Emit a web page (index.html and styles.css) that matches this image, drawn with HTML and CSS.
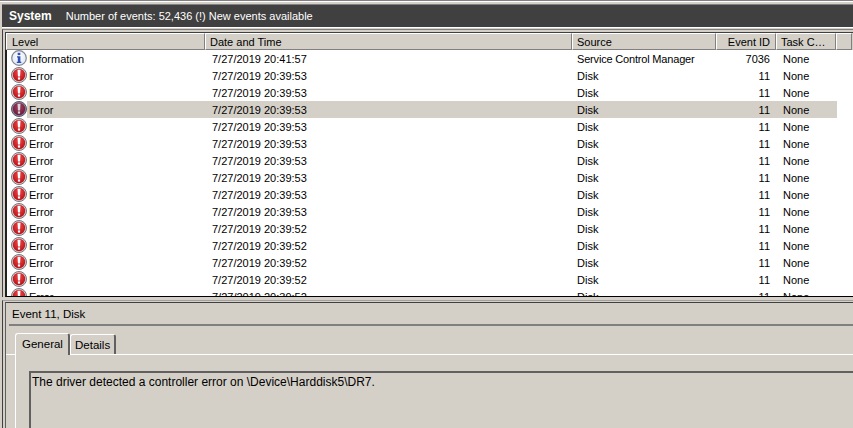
FILE: index.html
```html
<!DOCTYPE html>
<html lang="en">
<head>
<meta charset="utf-8">
<title>Event Viewer</title>
<link rel="stylesheet" href="styles.css">
</head>
<body>
<svg class="defs" width="0" height="0" aria-hidden="true">
  <defs>
    <radialGradient id="red" cx="50%" cy="35%" r="65%">
      <stop offset="0" stop-color="#f0484a"/><stop offset="1" stop-color="#b80f14"/>
    </radialGradient>
    <radialGradient id="redsel" cx="50%" cy="35%" r="65%">
      <stop offset="0" stop-color="#a8405c"/><stop offset="1" stop-color="#6a1a3c"/>
    </radialGradient>
    <radialGradient id="blue" cx="50%" cy="40%" r="60%">
      <stop offset="0" stop-color="#ffffff"/><stop offset="1" stop-color="#dfe6f2"/>
    </radialGradient>
    <symbol id="err" viewBox="0 0 16 16">
      <circle cx="8" cy="8" r="7.5" fill="#d2d2d6" stroke="#77777c" stroke-width="1"/>
      <circle cx="8" cy="8" r="6.2" fill="url(#red)"/>
      <path d="M6.5 2.8h3l-.5 6.6H7z" fill="#fff"/>
      <rect x="6.9" y="10.4" width="2.2" height="2.2" fill="#fff"/>
    </symbol>
    <symbol id="errsel" viewBox="0 0 16 16">
      <circle cx="8" cy="8" r="7.5" fill="#8d8aa0" stroke="#55556a" stroke-width="1"/>
      <circle cx="8" cy="8" r="6.2" fill="url(#redsel)"/>
      <path d="M6.5 2.8h3l-.5 6.6H7z" fill="#d8d4dc"/>
      <rect x="6.9" y="10.4" width="2.2" height="2.2" fill="#d8d4dc"/>
    </symbol>
    <symbol id="inf" viewBox="0 0 16 16">
      <circle cx="8" cy="8" r="7.3" fill="url(#blue)" stroke="#7f8794" stroke-width="1.2"/>
      <rect x="6.7" y="2.8" width="2.6" height="2.3" fill="#2c4fb8"/>
      <path d="M6 6.2h3.4v5.6h.9v1.2H5.8v-1.2h1V7.4H6z" fill="#2c4fb8"/>
    </symbol>
  </defs>
</svg>

<div class="topline"></div>
<header class="titlebar">
  <span class="title">System</span>
  <span class="summary">Number of events: 52,436 (!) New events available</span>
</header>

<section class="list">
  <div class="row head">
    <div class="hcell">Level</div>
    <div class="hcell">Date and Time</div>
    <div class="hcell">Source</div>
    <div class="hcell num">Event ID</div>
    <div class="hcell">Task C…</div>
    <div class="hcell stub"></div>
  </div>
  <div class="rows">
    <div class="row ev"><svg class="ico"><use href="#inf"/></svg><div class="c lvl">Information</div><div class="c dt">7/27/2019 20:41:57</div><div class="c src">Service Control Manager</div><div class="c num">7036</div><div class="c task">None</div></div>
    <div class="row ev"><svg class="ico"><use href="#err"/></svg><div class="c lvl">Error</div><div class="c dt">7/27/2019 20:39:53</div><div class="c">Disk</div><div class="c num">11</div><div class="c task">None</div></div>
    <div class="row ev"><svg class="ico"><use href="#err"/></svg><div class="c lvl">Error</div><div class="c dt">7/27/2019 20:39:53</div><div class="c">Disk</div><div class="c num">11</div><div class="c task">None</div></div>
    <div class="row ev sel"><svg class="ico"><use href="#errsel"/></svg><div class="c lvl">Error</div><div class="c dt">7/27/2019 20:39:53</div><div class="c">Disk</div><div class="c num">11</div><div class="c task">None</div></div>
    <div class="row ev"><svg class="ico"><use href="#err"/></svg><div class="c lvl">Error</div><div class="c dt">7/27/2019 20:39:53</div><div class="c">Disk</div><div class="c num">11</div><div class="c task">None</div></div>
    <div class="row ev"><svg class="ico"><use href="#err"/></svg><div class="c lvl">Error</div><div class="c dt">7/27/2019 20:39:53</div><div class="c">Disk</div><div class="c num">11</div><div class="c task">None</div></div>
    <div class="row ev"><svg class="ico"><use href="#err"/></svg><div class="c lvl">Error</div><div class="c dt">7/27/2019 20:39:53</div><div class="c">Disk</div><div class="c num">11</div><div class="c task">None</div></div>
    <div class="row ev"><svg class="ico"><use href="#err"/></svg><div class="c lvl">Error</div><div class="c dt">7/27/2019 20:39:53</div><div class="c">Disk</div><div class="c num">11</div><div class="c task">None</div></div>
    <div class="row ev"><svg class="ico"><use href="#err"/></svg><div class="c lvl">Error</div><div class="c dt">7/27/2019 20:39:53</div><div class="c">Disk</div><div class="c num">11</div><div class="c task">None</div></div>
    <div class="row ev"><svg class="ico"><use href="#err"/></svg><div class="c lvl">Error</div><div class="c dt">7/27/2019 20:39:53</div><div class="c">Disk</div><div class="c num">11</div><div class="c task">None</div></div>
    <div class="row ev"><svg class="ico"><use href="#err"/></svg><div class="c lvl">Error</div><div class="c dt">7/27/2019 20:39:52</div><div class="c">Disk</div><div class="c num">11</div><div class="c task">None</div></div>
    <div class="row ev"><svg class="ico"><use href="#err"/></svg><div class="c lvl">Error</div><div class="c dt">7/27/2019 20:39:52</div><div class="c">Disk</div><div class="c num">11</div><div class="c task">None</div></div>
    <div class="row ev"><svg class="ico"><use href="#err"/></svg><div class="c lvl">Error</div><div class="c dt">7/27/2019 20:39:52</div><div class="c">Disk</div><div class="c num">11</div><div class="c task">None</div></div>
    <div class="row ev"><svg class="ico"><use href="#err"/></svg><div class="c lvl">Error</div><div class="c dt">7/27/2019 20:39:52</div><div class="c">Disk</div><div class="c num">11</div><div class="c task">None</div></div>
    <div class="row ev"><svg class="ico"><use href="#err"/></svg><div class="c lvl">Error</div><div class="c dt">7/27/2019 20:39:52</div><div class="c">Disk</div><div class="c num">11</div><div class="c task">None</div></div>
  </div>
</section>

<section class="detail">
  <div class="panel">
    <div class="detail-title">Event 11, Disk</div>
    <div class="tabs">
      <div class="tab active">General</div>
      <div class="tab">Details</div>
    </div>
    <div class="tabbody">
      <div class="message">The driver detected a controller error on \Device\Harddisk5\DR7.</div>
    </div>
  </div>
</section>
</body>
</html>
```

FILE: styles.css
```css
* { box-sizing: border-box; }
html, body { height: 100%; }
body {
  margin: 0;
  height: 428px;
  overflow: hidden;
  background: #d4d0c8;
  color: #000;
  font-family: "Liberation Sans", Arial, sans-serif;
  font-size: 11px;
  display: flex;
  flex-direction: column;
}
.defs { position: absolute; }

.topline {
  flex: none;
  height: 4px;
  border-top: 1px solid #808080;
  box-shadow: inset 0 1px 0 #fff;
}
.titlebar {
  flex: none;
  height: 24px;
  margin-left: 2px;
  padding: 0 0 1px 7px;
  display: flex;
  align-items: center;
  gap: 14px;
  background: #404040;
  color: #fff;
  border-top: 1px solid #808080;
  border-bottom: 1px solid #fff;
}
.title { font-weight: 700; font-size: 12px; }

.list {
  flex: none;
  height: 268px;
  margin: 1px 0 0 2px;
  padding: 2px 0 0 2px;
  border-top: 1px solid #808080;
  border-left: 1px solid #404040;
  overflow: hidden;
  display: flex;
  flex-direction: column;
}
.row {
  display: grid;
  grid-template-columns: 199px 367px 144px 60px 60px 16px;
}
.head {
  flex: none;
  height: 18px;
  border-left: 1px solid #404040;
  border-top: 1px solid #404040;
  background: #d4d0c8;
}
.hcell {
  height: 17px;
  line-height: 17px;
  padding: 0 3px 0 4px;
  border-top: 1px solid #fff;
  border-left: 1px solid #fff;
  border-right: 1px solid #808080;
  border-bottom: 1px solid #808080;
  white-space: nowrap;
  overflow: hidden;
}
.hcell:first-child { padding-left: 5px; }
.hcell.num { text-align: right; padding-right: 5px; }
.rows {
  flex: 1;
  min-height: 0;
  overflow: hidden;
  background: #fff;
  border-left: 2px solid #202020;
  border-bottom: 1px solid #000;
}
.ev {
  position: relative;
  height: 17px;
  line-height: 19px;
  grid-template-columns: 197px 365px 144px 60px 60px;
  width: 830px;
}
.ev > .c { white-space: nowrap; padding-left: 8px; }
.ev > .lvl { padding-left: 22px; }
.ev > .src { letter-spacing: -0.18px; }
.ev > .num { text-align: right; padding: 0 3px 0 0; }
.ev > .task { padding-left: 10px; }
.ev.sel {
  background: linear-gradient(#d4d0c8, #d4d0c8) 20px 0 no-repeat;
}
.ico {
  position: absolute;
  left: 4px;
  top: 0;
  width: 16px;
  height: 16px;
}

.detail {
  flex: 1;
  min-height: 0;
  margin: 3px 0 0 2px;
  padding: 1px 0 0 2px;
  border-top: 1px solid #a0a0a0;
  border-left: 1px solid #404040;
}
.panel {
  height: 100%;
  border-top: 1px solid #404040;
  border-left: 1px solid #606060;
}
.detail-title {
  height: 23px;
  line-height: 22px;
  margin-left: 3px;
  padding-left: 3px;
  border-bottom: 2px solid #808080;
  font-size: 11.5px;
}
.tabs {
  display: flex;
  align-items: flex-end;
  height: 29px;
  padding-left: 9px;
  border-bottom: 1px solid #fff;
}
.tab {
  width: 46px;
  height: 20px;
  padding-left: 4px;
  line-height: 21px;
  border-top: 1px solid #fff;
  border-left: 1px solid #fff;
  border-right: 2px solid #606060;
  border-radius: 3px 3px 0 0;
  font-size: 11.5px;
}
.tab.active {
  width: 55px;
  height: 22px;
  padding-left: 6px;
  margin-bottom: -1px;
  line-height: 20px;
  position: relative;
  background: #d4d0c8;
}
.tabbody {
  margin-left: 9px;
  padding: 16px 0 0 13px;
  border-left: 1px solid #fff;
  height: 80px;
}
.message {
  height: 70px;
  padding: 1px 0 0 1px;
  border-top: 2px solid #606060;
  border-left: 2px solid #606060;
  line-height: 17px;
  font-size: 12px;
}
```
